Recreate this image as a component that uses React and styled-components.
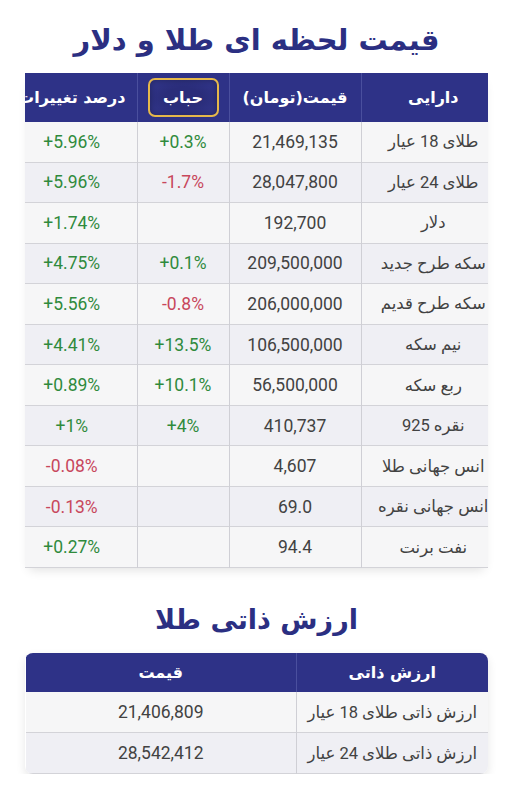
import React from 'react'
import styled, { createGlobalStyle } from 'styled-components'

const GlobalStyle = createGlobalStyle`
  body {
    margin: 0;
    background: #ffffff;
    font-family: Roboto, "DejaVu Sans", sans-serif;
  }
`;

const Page = styled.div`
  direction: rtl;
  width: 512px;
  padding: 0 24px 0 25px;
  box-sizing: border-box;
`;

const Title = styled.h1`
  margin: 0;
  padding-top: ${p => p.top}px;
  height: ${p => p.h}px;
  box-sizing: border-box;
  text-align: center;
  color: #2b2f82;
  font-family: "DejaVu Sans", sans-serif;
  font-weight: bold;
  font-size: ${p => p.size}px;
  line-height: 1.2;
  white-space: nowrap;
`;

const ScrollBox = styled.div`
  overflow: hidden;
  box-shadow: 0 6px 10px -4px rgba(0, 0, 0, 0.12);
`;

const Table = styled.table`
  border-collapse: collapse;
  table-layout: fixed;
  width: ${p => p.w}px;
  margin-right: ${p => p.shift}px;
`;

const HeadCell = styled.th`
  background: #2e3287;
  color: #ffffff;
  height: ${p => p.h}px;
  padding: 0;
  font-family: "DejaVu Sans", sans-serif;
  font-weight: bold;
  font-size: 16px;
  text-align: center;
  white-space: nowrap;
  overflow: hidden;
  border-left: 1px solid #4a4f9e;
  &:last-child {
    border-left: none;
  }
`;

const Badge = styled.span`
  display: inline-flex;
  align-items: center;
  justify-content: center;
  width: 71px;
  height: 39px;
  box-sizing: border-box;
  border: 2px solid #e5b84a;
  border-radius: 7px;
  background: radial-gradient(ellipse at center, #2a2d7a 40%, #34388f 100%);
  box-shadow: inset 0 0 6px rgba(0, 0, 0, 0.35);
`;

const Row = styled.tr`
  background: ${p => (p.alt ? '#efeff4' : '#f6f6f7')};
  border-bottom: 1px solid #d3d3d8;
`;

const Cell = styled.td`
  height: ${p => p.h}px;
  padding: 0;
  text-align: center;
  font-size: ${p => (p.num ? 17.5 : 16.5)}px;
  color: ${p => (p.tone === 'up' ? '#2f8a3c' : p.tone === 'down' ? '#c8475c' : '#424242')};
  direction: ${p => (p.num ? 'ltr' : 'rtl')};
  white-space: nowrap;
  overflow: hidden;
  border-left: 1px solid #cfcfd5;
  &:last-child {
    border-left: none;
  }
`;

const Card = styled.div`
  border-radius: 8px;
  overflow: hidden;
  box-shadow: 0 4px 10px rgba(0, 0, 0, 0.1);
`;

const rows = [
  ['طلای 18 عیار', '21,469,135', '+0.3%', '+5.96%'],
  ['طلای 24 عیار', '28,047,800', '-1.7%', '+5.96%'],
  ['دلار', '192,700', '', '+1.74%'],
  ['سکه طرح جدید', '209,500,000', '+0.1%', '+4.75%'],
  ['سکه طرح قدیم', '206,000,000', '-0.8%', '+5.56%'],
  ['نیم سکه', '106,500,000', '+13.5%', '+4.41%'],
  ['ربع سکه', '56,500,000', '+10.1%', '+0.89%'],
  ['نقره 925', '410,737', '+4%', '+1%'],
  ['انس جهانی طلا', '4,607', '', '-0.08%'],
  ['انس جهانی نقره', '69.0', '', '-0.13%'],
  ['نفت برنت', '94.4', '', '+0.27%'],
];

const intrinsic = [
  ['ارزش ذاتی طلای 18 عیار', '21,406,809'],
  ['ارزش ذاتی طلای 24 عیار', '28,542,412'],
];

const tone = v => (v.startsWith('+') ? 'up' : v.startsWith('-') ? 'down' : null);

const App = () => {
  return (
    <Page>
      <GlobalStyle />
      <Title top={23} h={73} size={29}>قیمت لحظه ای طلا و دلار</Title>
      <ScrollBox>
        <Table w={498} shift={-17}>
          <colgroup>
            <col style={{ width: 144 }} />
            <col style={{ width: 132 }} />
            <col style={{ width: 92 }} />
            <col style={{ width: 130 }} />
          </colgroup>
          <thead>
            <tr>
              <HeadCell h={49}>دارایی</HeadCell>
              <HeadCell h={49}>قیمت(تومان)</HeadCell>
              <HeadCell h={49}><Badge>حباب</Badge></HeadCell>
              <HeadCell h={49}>درصد تغییرات</HeadCell>
            </tr>
          </thead>
          <tbody>
            {rows.map((r, i) => (
              <Row key={r[0]} alt={i % 2 === 1}>
                <Cell h={39.55}>{r[0]}</Cell>
                <Cell h={39.55} num>{r[1]}</Cell>
                <Cell h={39.55} num tone={tone(r[2])}>{r[2]}</Cell>
                <Cell h={39.55} num tone={tone(r[3])}>{r[3]}</Cell>
              </Row>
            ))}
          </tbody>
        </Table>
      </ScrollBox>
      <Title top={36} h={85} size={27}>ارزش ذاتی طلا</Title>
      <Card>
        <Table w={462} shift={0}>
          <colgroup>
            <col style={{ width: 192 }} />
            <col style={{ width: 270 }} />
          </colgroup>
          <thead>
            <tr>
              <HeadCell h={39}>ارزش ذاتی</HeadCell>
              <HeadCell h={39}>قیمت</HeadCell>
            </tr>
          </thead>
          <tbody>
            {intrinsic.map((r, i) => (
              <Row key={r[0]} alt={i % 2 === 1}>
                <Cell h={40}>{r[0]}</Cell>
                <Cell h={40} num>{r[1]}</Cell>
              </Row>
            ))}
          </tbody>
        </Table>
      </Card>
    </Page>
  )
}

export default App
